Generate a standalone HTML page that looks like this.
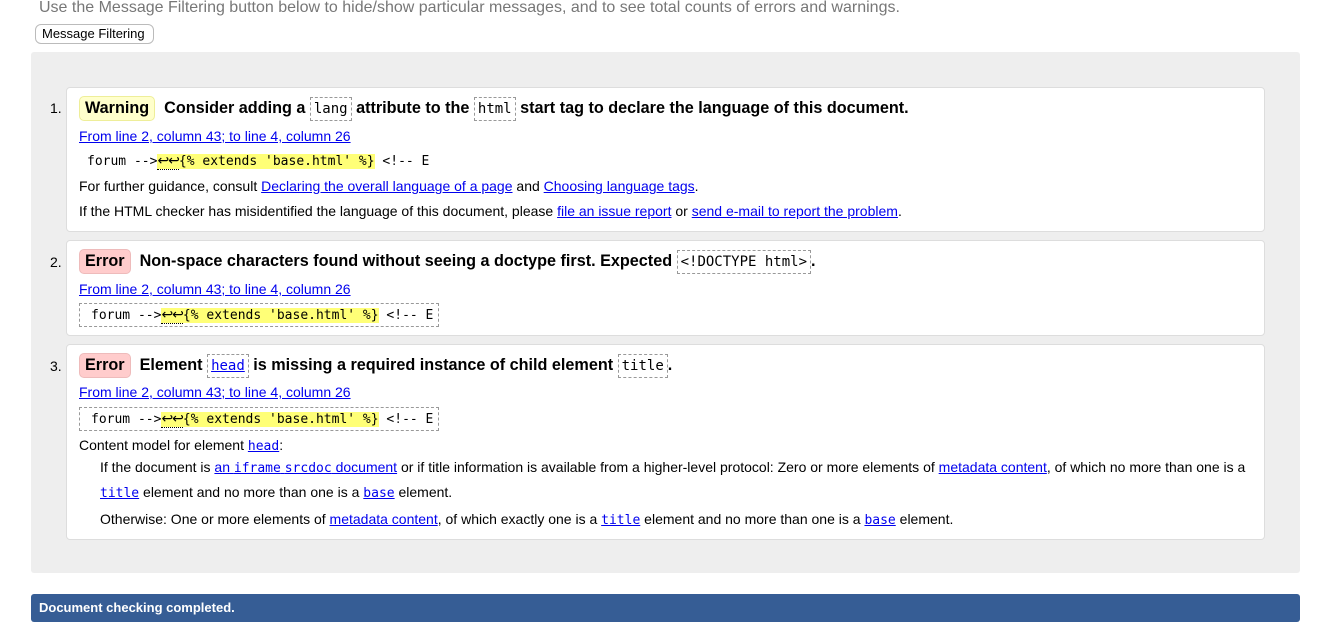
<!DOCTYPE html>
<html><head><meta charset="utf-8"><style>
*{margin:0;padding:0;box-sizing:border-box}
body{width:1335px;height:629px;overflow:hidden;background:#fff;font-family:"Liberation Sans",Arial,sans-serif;font-size:14px;color:#000;position:relative}
.a{position:absolute;white-space:nowrap}
a{color:#00e;text-decoration:underline}
code,.m{font-family:"DejaVu Sans Mono","Liberation Mono",monospace;font-size:13px}
.box{position:absolute;background:#fff;border:1px solid #ddd;border-radius:4px;left:66px;width:1199px}
.num{position:absolute;left:50px;font-size:14px}
.h{font-size:16.2px;font-weight:bold}
.badge{display:inline-block;padding:2px 5px;border-radius:5px;border:1px solid;font-weight:bold;font-size:16.2px}
.w{background:#ffc;border-color:#ee9}
.e{background:#fcc;border-color:#ebb}
.c{display:inline-block;border:1px dashed #999;padding:3px 3px;font-weight:normal;font-family:"DejaVu Sans Mono","Liberation Mono",monospace;font-size:14px}
.ext{display:inline-block;border:1px dashed #999;padding:3px 5px 3px 11px;font-family:"DejaVu Sans Mono","Liberation Mono",monospace;font-size:13px}
.hl{background:#ff7}
.nl{border-bottom:1px dotted #000;font-family:"DejaVu Sans",sans-serif;font-size:14px;letter-spacing:-1px}
</style></head><body>
<div class="a" style="left:39px;top:-1px;font-size:16px;color:#777">Use the Message Filtering button below to hide/show particular messages, and to see total counts of errors and warnings.</div>
<div class="a" style="left:35px;top:24px;height:20px;width:119px;border:1px solid #bbb;border-radius:6px;font-size:13px;padding:1px 0 0 6px">Message Filtering</div>
<div class="a" style="left:31px;top:52px;width:1269px;height:521px;background:#eee;border-radius:3px"></div>

<div class="box" style="top:87px;height:145px"></div>
<div class="num" style="top:100px">1.</div>
<div class="a h" style="left:79px;top:96px"><span class="badge w">Warning</span>&nbsp; Consider adding a <span class="c">lang</span> attribute to the <span class="c">html</span> start tag to declare the language of this document.</div>
<div class="a" style="left:79px;top:128px"><a>From line 2, column 43; to line 4, column 26</a></div>
<div class="a m" style="left:87px;top:153px">forum --&gt;<span class="hl"><span class="nl">↩↩</span>{% extends 'base.html' %}</span> &lt;!-- E</div>
<div class="a" style="left:79px;top:178px">For further guidance, consult <a>Declaring the overall language of a page</a> and <a>Choosing language tags</a>.</div>
<div class="a" style="left:79px;top:203px">If the HTML checker has misidentified the language of this document, please <a>file an issue report</a> or <a>send e-mail to report the problem</a>.</div>

<div class="box" style="top:240px;height:96px"></div>
<div class="num" style="top:254px">2.</div>
<div class="a h" style="left:79px;top:249px"><span class="badge e">Error</span>&nbsp; Non-space characters found without seeing a doctype first. Expected <span class="c">&lt;!DOCTYPE html&gt;</span>.</div>
<div class="a" style="left:79px;top:281px"><a>From line 2, column 43; to line 4, column 26</a></div>
<div class="a ext" style="left:79px;top:303px">forum --&gt;<span class="hl"><span class="nl">↩↩</span>{% extends 'base.html' %}</span> &lt;!-- E</div>

<div class="box" style="top:344px;height:196px"></div>
<div class="num" style="top:358px">3.</div>
<div class="a h" style="left:79px;top:353px"><span class="badge e">Error</span>&nbsp; Element <span class="c"><a>head</a></span> is missing a required instance of child element <span class="c">title</span>.</div>
<div class="a" style="left:79px;top:384px"><a>From line 2, column 43; to line 4, column 26</a></div>
<div class="a ext" style="left:79px;top:407px">forum --&gt;<span class="hl"><span class="nl">↩↩</span>{% extends 'base.html' %}</span> &lt;!-- E</div>
<div class="a" style="left:79px;top:437px">Content model for element <a><code>head</code></a>:</div>
<div class="a" style="left:100px;top:459px">If the document is <a>an <code>iframe</code> <code>srcdoc</code> document</a> or if title information is available from a higher-level protocol: Zero or more elements of <a>metadata content</a>, of which no more than one is a</div>
<div class="a" style="left:100px;top:484px"><a><code>title</code></a> element and no more than one is a <a><code>base</code></a> element.</div>
<div class="a" style="left:100px;top:511px">Otherwise: One or more elements of <a>metadata content</a>, of which exactly one is a <a><code>title</code></a> element and no more than one is a <a><code>base</code></a> element.</div>

<div class="a" style="left:31px;top:594px;width:1269px;height:28px;background:#365d95;border-radius:3px;color:#fff;font-weight:bold;font-size:13px;padding:6px 0 0 8px">Document checking completed.</div>
</body></html>
